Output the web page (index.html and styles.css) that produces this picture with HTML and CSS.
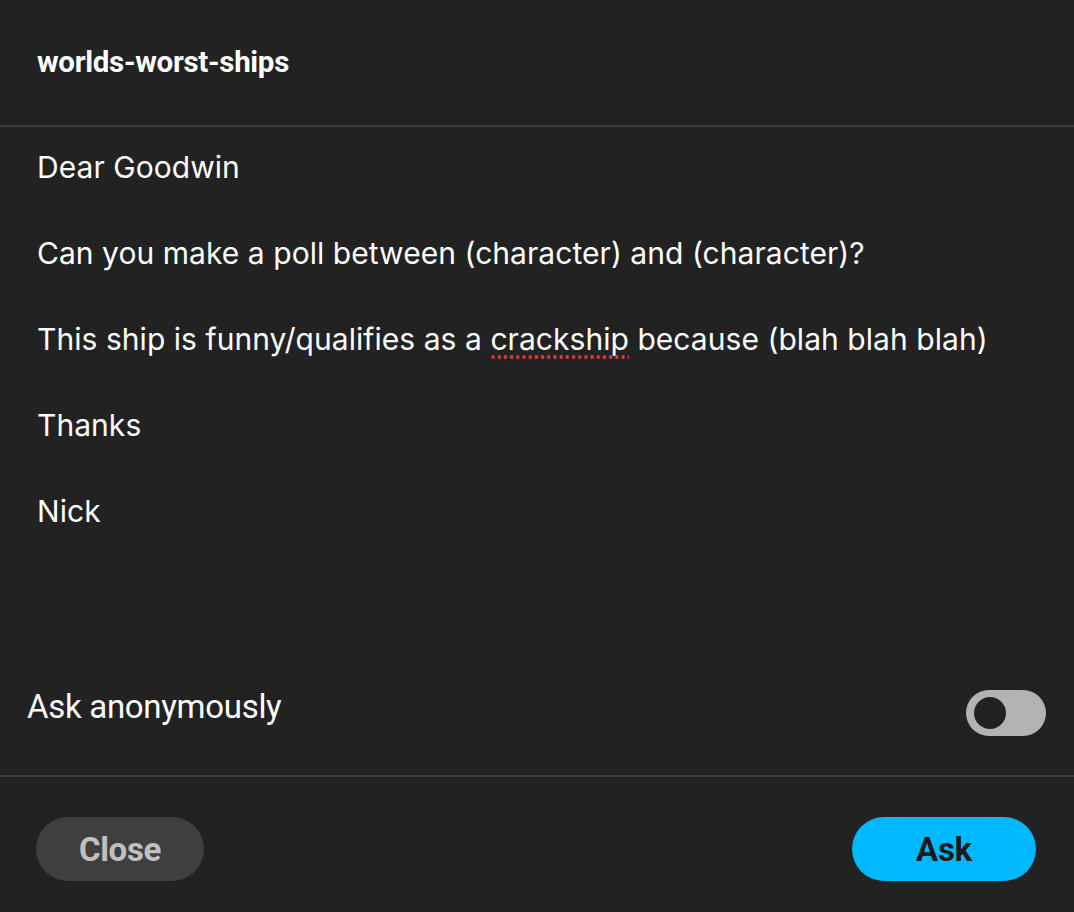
FILE: index.html
```html
<!DOCTYPE html>
<html>
<head>
<meta charset="utf-8">
<link rel="stylesheet" href="styles.css">
</head>
<body>
<div class="dialog">
  <header class="head">
    <h1 class="title">worlds-worst-ships</h1>
  </header>
  <div class="body">
    <p class="line">Dear Goodwin</p>
    <p class="line">Can you make a poll between (character) and (character)?</p>
    <p class="line">This ship is funny/qualifies as a <span class="spell">crackship</span> because (blah blah blah)</p>
    <p class="line">Thanks</p>
    <p class="line">Nick</p>
  </div>
  <div class="anon">
    <span class="anon-label">Ask anonymously</span>
    <span class="toggle"><span class="knob"></span></span>
  </div>
  <footer class="foot">
    <button class="btn btn-close">Close</button>
    <button class="btn btn-ask">Ask</button>
  </footer>
</div>
</body>
</html>
```

FILE: styles.css
```css
html, body {
  margin: 0;
  padding: 0;
  background: #222222;
}
.dialog {
  width: 1074px;
  height: 912px;
  background: #222222;
  color: #ffffff;
  display: flex;
  flex-direction: column;
}
.head {
  border-bottom: 2px solid #3d3d3d;
  display: flex;
  align-items: center;
  padding-left: 37px;
  box-sizing: border-box;
  height: 127px;
}
.title {
  margin: 0;
  font-family: "Roboto", "Liberation Sans", sans-serif;
  font-weight: 700;
  font-size: 29.5px;
  letter-spacing: -0.3px;
  padding-bottom: 1px;
}
.body {
  padding: 19px 37px 0;
  height: 520px;
  box-sizing: border-box;
}
.line {
  margin: 0 0 43px;
  font-family: "Inter", "Noto Sans", sans-serif;
  font-size: 30px;
  line-height: 43px;
  letter-spacing: 0.05px;
}
.spell {
  background-image: radial-gradient(circle, #d63a3f 1.7px, transparent 1.9px);
  background-size: 6.2px 4px;
  background-repeat: repeat-x;
  background-position: 0 100%;
  padding-bottom: 2px;
}
.anon {
  height: 130px;
  border-bottom: 2px solid #3d3d3d;
  box-sizing: border-box;
  display: flex;
  align-items: center;
  justify-content: space-between;
  padding: 0 28px 0 27px;
}
.anon-label {
  font-family: "Roboto", "Liberation Sans", sans-serif;
  font-size: 33px;
  letter-spacing: -0.3px;
  margin-top: -10px;
}
.toggle {
  width: 80px;
  height: 46px;
  border-radius: 23px;
  background: #b3b3b3;
  display: flex;
  align-items: center;
  padding-left: 8px;
  box-sizing: border-box;
  margin-top: 4px;
}
.knob {
  width: 32px;
  height: 32px;
  border-radius: 50%;
  background: #222222;
}
.foot {
  flex: 1;
  display: flex;
  align-items: center;
  justify-content: space-between;
  padding: 9px 38px 0 36px;
}
.btn {
  border: none;
  height: 64px;
  border-radius: 32px;
  font-family: "Roboto", "Liberation Sans", sans-serif;
  font-weight: 700;
  font-size: 33px;
  letter-spacing: -0.3px;
  padding: 0;
}
.btn-close {
  width: 168px;
  background: #3f3f3f;
  color: #c0c0c0;
}
.btn-ask {
  width: 184px;
  background: #00b8ff;
  color: #1a1a1a;
}
```
